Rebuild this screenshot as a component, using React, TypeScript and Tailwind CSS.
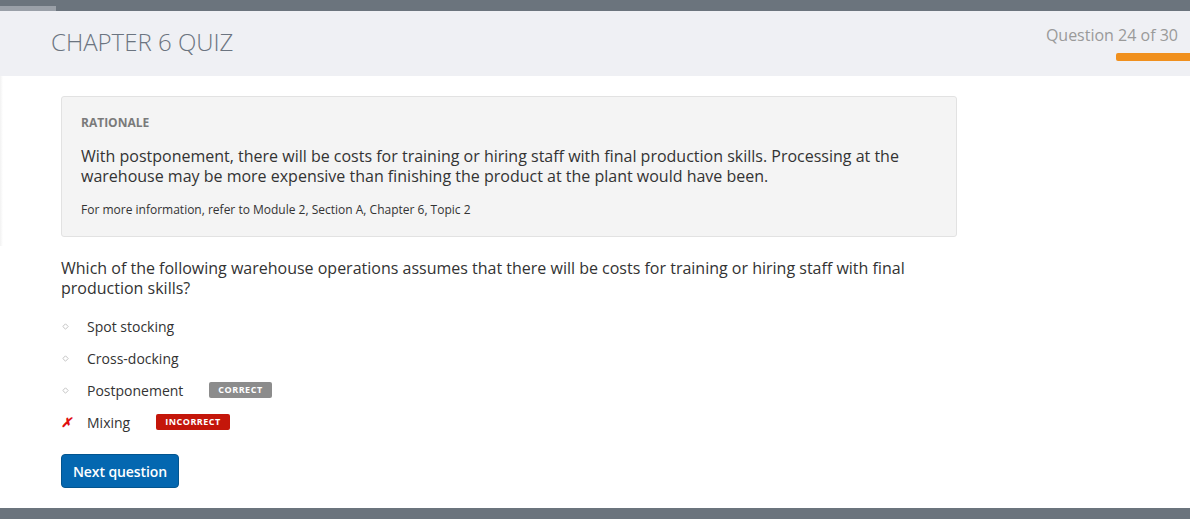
import React from "react"

const options = [
  { label: "Spot stocking", mark: "dot" },
  { label: "Cross-docking", mark: "dot" },
  { label: "Postponement", mark: "dot", badge: "correct" },
  { label: "Mixing", mark: "wrong", badge: "incorrect" },
]

const Diamond = () => (
  <svg width="7" height="7" viewBox="0 0 7 7" className="block">
    <path d="M3.5 0.8 L6.2 3.5 L3.5 6.2 L0.8 3.5 Z" fill="none" stroke="#c4c4c4" strokeWidth="1" />
  </svg>
)

export default function App() {
  return (
    <div className="w-[1190px] h-[519px] flex flex-col bg-white font-['Open_Sans',sans-serif] overflow-hidden">
      {/* top progress strip */}
      <div className="h-[11px] bg-[#6b747d] flex items-end">
        <div className="w-[56px] h-[5px] bg-[#9aa0a8]" />
      </div>

      {/* header */}
      <div className="h-[65px] bg-[#eff0f4] flex justify-between">
        <h1 className="pl-[51px] pt-[16px] text-[24px] font-light text-[#6b7480] leading-[30px]">
          CHAPTER 6 QUIZ
        </h1>
        <div className="flex flex-col items-end">
          <span className="pr-[12px] pt-[13px] text-[16px] text-[#9a9a9a] leading-[22px]">Question 24 of 30</span>
          <div className="mt-[7px] w-[74px] h-[8px] bg-[#f0901e] rounded-l-[2px]" />
        </div>
      </div>

      <div className="flex-1 flex">
        <div className="w-[3px] bg-gradient-to-r from-[#f2f2f2] to-white h-[170px]" />
        <main className="pl-[58px] pt-[20px] w-[960px]">
          <section className="w-[896px] bg-[#f4f4f4] border border-[#e2e2e2] rounded-[3px] px-[19px] pt-[17px] pb-[17px]">
            <h2 className="text-[12px] font-bold text-[#7a7a7a] leading-[18px]">RATIONALE</h2>
            <p className="mt-[14px] text-[16px] text-[#333] leading-[20px]">
              With postponement, there will be costs for training or hiring staff with final production skills. Processing at the warehouse may be more expensive than finishing the product at the plant would have been.
            </p>
            <p className="mt-[15px] text-[12px] text-[#333] leading-[18px]">
              For more information, refer to Module 2, Section A, Chapter 6, Topic 2
            </p>
          </section>

          <p className="mt-[21px] w-[870px] text-[16px] text-[#333] leading-[20px]">
            Which of the following warehouse operations assumes that there will be costs for training or hiring staff with final production skills?
          </p>

          <ul className="mt-[18px] flex flex-col gap-[12px]">
            {options.map((o) => (
              <li key={o.label} className="flex items-center h-[20px]">
                <span className="w-[26px] flex justify-start">
                  {o.mark === "dot" ? (
                    <span className="pl-[1px]"><Diamond /></span>
                  ) : (
                    <span className="text-[#e01010] text-[13px] font-bold italic leading-none">✗</span>
                  )}
                </span>
                <span className="text-[14px] text-[#333]">{o.label}</span>
                {o.badge === "correct" && (
                  <span className="ml-[26px] h-[16px] px-[9px] bg-[#8c8c8c] rounded-[2px] text-white text-[9px] font-bold tracking-[0.5px] flex items-center">
                    CORRECT
                  </span>
                )}
                {o.badge === "incorrect" && (
                  <span className="ml-[26px] h-[16px] px-[9px] bg-[#c4160a] rounded-[2px] text-white text-[9px] font-bold tracking-[0.5px] flex items-center">
                    INCORRECT
                  </span>
                )}
              </li>
            ))}
          </ul>

          <button className="mt-[22px] h-[34px] px-[11px] bg-[#0467b0] border border-[#03558f] rounded-[4px] text-white text-[14px] font-semibold tracking-[-0.1px]">
            Next question
          </button>
        </main>
      </div>

      <div className="h-[11px] bg-[#6b747d]" />
    </div>
  )
}
